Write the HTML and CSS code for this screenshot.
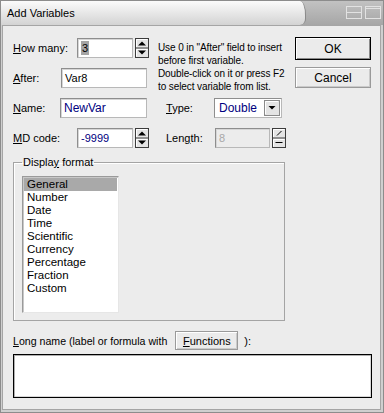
FILE: index.html
```html
<!DOCTYPE html>
<html>
<head>
<meta charset="utf-8">
<link rel="stylesheet" href="styles.css">
</head>
<body>
<div class="window">
  <div class="titlebar">
    <div class="tab"><span class="title">Add Variables</span></div>
    <div class="tb-icons">
      <svg width="17" height="14" viewBox="0 0 17 14"><rect x="0.5" y="0.5" width="15" height="12" fill="none" stroke="#e2e2e2"/><line x1="0" y1="6.5" x2="16" y2="6.5" stroke="#e2e2e2"/></svg>
      <svg width="17" height="14" viewBox="0 0 17 14"><rect x="0.5" y="0.5" width="15" height="12" fill="none" stroke="#e2e2e2"/><line x1="0" y1="2.5" x2="16" y2="2.5" stroke="#e2e2e2"/></svg>
    </div>
  </div>
  <div class="frame">
    <div class="client">
      <div class="top">
        <div class="form">
          <div class="row r1">
            <span class="lbl w64"><u>H</u>ow many:</span>
            <div class="edit w56"><span class="sel">3</span></div>
            <svg class="spin" width="14" height="20" viewBox="0 0 14 20"><rect x="0.5" y="0.5" width="13" height="19" fill="#e4e4e4" stroke="#3c3c3c"/><line x1="0" y1="10" x2="14" y2="10" stroke="#3c3c3c"/><path d="M1.5 9V1.5H12.5M1.5 18.5V11.5H12.5" stroke="#fff" fill="none"/><polygon points="3,7.5 11,7.5 7,3.5" fill="#000"/><polygon points="3,12.5 11,12.5 7,16.5" fill="#000"/></svg>
          </div>
          <div class="row r2">
            <span class="lbl w48"><u>A</u>fter:</span>
            <div class="edit w86">Var8</div>
          </div>
          <div class="info">Use 0 in "After" field to insert<br>before first variable.<br>Double-click on it or press F2<br>to select variable from list.</div>
          <div class="row r3">
            <span class="lbl w47"><u>N</u>ame:</span>
            <div class="edit w87 blue">NewVar</div>
            <span class="lbl w48 ml19"><u>T</u>ype:</span>
            <div class="combo"><span class="combo-text blue">Double</span><svg class="drop" width="16" height="16" viewBox="0 0 16 16"><rect x="0.5" y="0.5" width="15" height="15" fill="#e4e4e4" stroke="#8a8a8a"/><path d="M1.5 14V1.5H14" stroke="#fff" fill="none"/><polygon points="4.5,6 11.5,6 8,9.5" fill="#000"/></svg></div>
          </div>
          <div class="row r4">
            <span class="lbl w64"><u>M</u>D code:</span>
            <div class="edit w56 blue">-9999</div>
            <svg class="spin" width="14" height="20" viewBox="0 0 14 20"><rect x="0.5" y="0.5" width="13" height="19" fill="#e4e4e4" stroke="#3c3c3c"/><line x1="0" y1="10" x2="14" y2="10" stroke="#3c3c3c"/><path d="M1.5 9V1.5H12.5M1.5 18.5V11.5H12.5" stroke="#fff" fill="none"/><polygon points="3,7.5 11,7.5 7,3.5" fill="#000"/><polygon points="3,12.5 11,12.5 7,16.5" fill="#000"/></svg>
            <span class="lbl w49 ml17">Len<u>g</u>th:</span>
            <div class="edit w55 disabled">8</div>
            <svg class="spin" width="14" height="20" viewBox="0 0 14 20"><rect x="0.5" y="0.5" width="13" height="19" fill="#e4e4e4" stroke="#3c3c3c"/><line x1="0" y1="10" x2="14" y2="10" stroke="#3c3c3c"/><path d="M1.5 9V1.5H12.5M1.5 18.5V11.5H12.5" stroke="#fff" fill="none"/><path d="M5 7.5L9.5 3" stroke="#000" fill="none"/><line x1="3.5" y1="14.5" x2="10.5" y2="14.5" stroke="#000"/></svg>
          </div>
        </div>
        <div class="buttons">
          <div class="btn default">OK</div>
          <div class="btn">Cancel</div>
        </div>
      </div>
      <fieldset class="group">
        <legend>Displa<u>y</u> format</legend>
        <div class="listbox">
          <div class="item selected">General</div>
          <div class="item">Number</div>
          <div class="item">Date</div>
          <div class="item">Time</div>
          <div class="item">Scientific</div>
          <div class="item">Currency</div>
          <div class="item">Percentage</div>
          <div class="item">Fraction</div>
          <div class="item">Custom</div>
        </div>
      </fieldset>
      <div class="long-row">
        <span class="long-label"><u>L</u>ong name (label or formula with</span>
        <div class="btn fn"><u>F</u>unctions</div>
        <span class="close">):</span>
      </div>
      <div class="longbox"></div>
    </div>
  </div>
</div>
</body>
</html>
```
FILE: styles.css
```css
* { box-sizing: border-box; }
html, body { margin: 0; padding: 0; }
body {
  width: 384px;
  height: 413px;
  overflow: hidden;
  font-family: "Liberation Sans", Arial, sans-serif;
  font-size: 11px;
  color: #000;
  background: #fff;
}
u { text-decoration: underline; text-underline-offset: 1px; }

.window {
  width: 384px;
  height: 413px;
  border: 1px solid #8c8c8c;
  background: #cfcfcf;
  display: flex;
  flex-direction: column;
}
.titlebar {
  flex: 0 0 24px;
  display: flex;
  background: linear-gradient(#c2c2c2, #a6a6a6);
}
.tab {
  flex: 0 0 305px;
  background: linear-gradient(#fbfbfb, #d3d3d3);
  border-right: 1px solid #8a8a8a;
  border-top-right-radius: 6px 14px;
  border-bottom-right-radius: 6px 6px;
  padding-left: 6px;
  display: flex;
  align-items: center;
  font-size: 11px;
}
.tb-icons {
  margin-left: auto;
  display: flex;
  gap: 2px;
  padding: 5px 1px 0 0;
}
.frame {
  flex: 1;
  display: flex;
  padding: 0 2px 2px 1px;
}
.client {
  flex: 1;
  background: #ececec;
  border: 1px solid #a5a5a5;
  padding: 11px 8px 0 10px;
}

.top { display: flex; }
.form {
  flex: 0 0 282px;
  display: grid;
  grid-template-columns: 145px 1fr;
  grid-template-rows: repeat(4, 20px);
  row-gap: 10px;
  padding-top: 1px;
}
.row { display: flex; align-items: center; }
.r1 { grid-column: 1; grid-row: 1; }
.r2 { grid-column: 1; grid-row: 2; }
.r3 { grid-column: 1 / -1; grid-row: 3; }
.r4 { grid-column: 1 / -1; grid-row: 4; }
.info {
  grid-column: 2;
  grid-row: 1 / span 2;
  margin-top: 3px;
  line-height: 13px;
  font-size: 10px;
  letter-spacing: -0.1px;
  white-space: nowrap;
}
.lbl { flex: none; }
.w64 { width: 64px; }
.w48 { width: 48px; }
.w47 { width: 47px; }
.w49 { width: 49px; }
.ml19 { margin-left: 19px; }
.ml17 { margin-left: 17px; }

.edit {
  height: 20px;
  background: #fff;
  border: 1px solid #b8b8b8;
  border-top-color: #8e8e8e;
  border-left-color: #8e8e8e;
  box-shadow: inset 1px 1px 0 #d6d6d6;
  padding-left: 3px;
  display: flex;
  align-items: center;
  flex: none;
}
.w56 { width: 56px; }
.w86 { width: 86px; }
.w87 { width: 87px; }
.w55 { width: 55px; }
.blue { color: #000080; }
.sel { background: #a4a4a4; color: #000; padding: 0 1px; line-height: 14px; }
.disabled { background: #ececec; color: #a8a8a8; }
.spin { flex: none; margin-left: 2px; display: block; }

.combo {
  width: 68px;
  height: 20px;
  background: #fff;
  border: 1px solid #b8b8b8;
  border-top-color: #8e8e8e;
  border-left-color: #8e8e8e;
  display: flex;
  align-items: center;
  padding: 1px;
}
.combo-text { flex: 1; padding-left: 3px; font-size: 12px; }
.drop { display: block; }
.r3 .edit.blue { font-size: 12px; }

.buttons {
  flex: 0 0 76px;
  display: flex;
  flex-direction: column;
  gap: 7px;
}
.btn {
  height: 21px;
  background: #ebebeb;
  border: 1px solid #9a9a9a;
  box-shadow: inset 1px 1px 0 #fff, inset -1px -1px 0 #cacaca;
  display: flex;
  align-items: center;
  justify-content: center;
  font-size: 12px;
}
.btn.default {
  height: 23px;
  border: 1px solid #000;
  box-shadow: inset 1px 1px 0 #fff, inset -1px -1px 0 #8a8a8a;
}

.group {
  margin: 8px 0 0 0;
  width: 272px;
  border: 1px solid #a4a4a4;
  box-shadow: inset 1px 1px 0 #fff;
  padding: 7px 8px 7px 8px;
}
.group legend {
  padding: 0 1px;
  line-height: 13px;
  font-size: 11px;
}
.listbox {
  width: 97px;
  height: 137px;
  background: #fff;
  border: 1px solid #e6e6e6;
  border-top-color: #9a9a9a;
  border-left-color: #9a9a9a;
  box-shadow: inset 1px 1px 0 #c8c8c8;
  padding: 1px 1px 0 1px;
}
.item {
  height: 13px;
  line-height: 13px;
  padding-left: 3px;
  font-size: 11.5px;
}
.item.selected { background: #a9a9a9; }

.long-row {
  margin-top: 10px;
  height: 19px;
  display: flex;
  align-items: center;
}
.long-label { font-size: 10.6px; }
.btn.fn {
  width: 63px;
  height: 19px;
  margin-left: 8px;
  font-size: 11px;
}
.close { margin-left: 6px; }
.longbox {
  margin-top: 4px;
  height: 44px;
  background: #fff;
  border: 1px solid #000;
  box-shadow: inset 1px 1px 0 #b0b0b0, inset -1px -1px 0 #d8d8d8;
}
```
